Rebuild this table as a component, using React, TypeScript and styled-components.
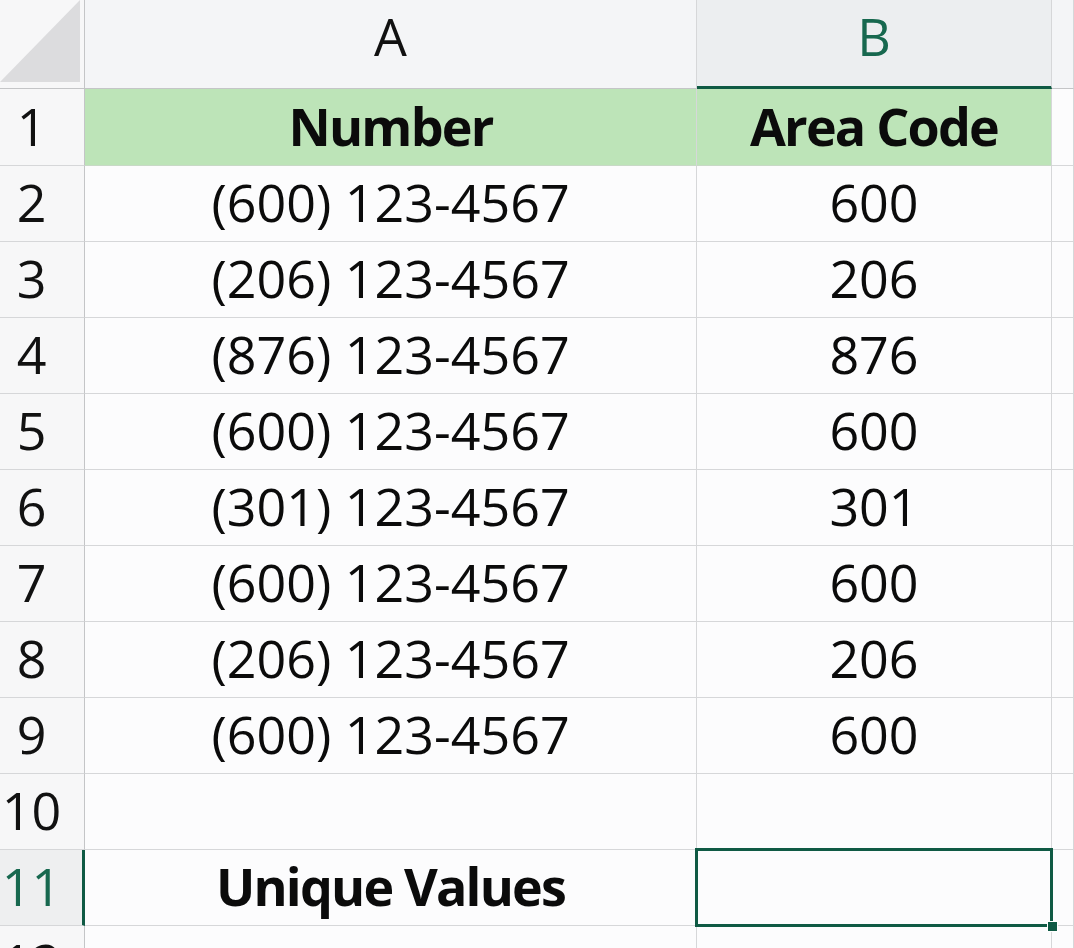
import React from "react";
import styled, { createGlobalStyle, css } from "styled-components";

const GREEN = "#0f5a44";
const GRID = "#d6d7d9";
const HEAD_LINE = "#c4c5c7";

const Global = createGlobalStyle`
  html, body { margin: 0; padding: 0; background: #fcfcfd; }
  body { font-family: "Open Sans", "Noto Sans", sans-serif; overflow: hidden; }
`;

const Sheet = styled.div`
  display: grid;
  grid-template-columns: 85px 612px 355px 1fr;
  grid-template-rows: 89px 77px repeat(11, 76px);
  width: 1074px;
  height: 948px;
  overflow: hidden;
  background: #fcfcfd;
  font-size: 52px;
  color: #0b0b0b;
`;

const Corner = styled.div`
  background: #f7f7f8;
  border-right: 1px solid ${HEAD_LINE};
  border-bottom: 1px solid ${HEAD_LINE};
  display: flex;
  align-items: flex-start;
  justify-content: flex-start;
`;

const ColHeader = styled.div<{ $selected?: boolean }>`
  display: flex;
  justify-content: center;
  align-items: flex-start;
  box-sizing: border-box;
  background: ${(p) => (p.$selected ? "#eceef0" : "#f4f5f7")};
  border-right: 1px solid ${GRID};
  border-bottom: 1px solid ${HEAD_LINE};
  color: ${(p) => (p.$selected ? "#17684f" : "#111")};
  ${(p) =>
    p.$selected &&
    css`
      border-bottom: 3px solid ${GREEN};
    `}
`;

const RowHeader = styled.div<{ $active?: boolean }>`
  display: flex;
  justify-content: center;
  align-items: center;
  padding-right: 21px;
  padding-bottom: 4px;
  box-sizing: border-box;
  background: ${(p) => (p.$active ? "#eeeff0" : "#f7f7f8")};
  border-right: 1px solid ${HEAD_LINE};
  border-bottom: 1px solid ${GRID};
  color: ${(p) => (p.$active ? "#17684f" : "#111")};
  ${(p) =>
    p.$active &&
    css`
      border-right: 3px solid ${GREEN};
      padding-right: 19px;
    `}
`;

const Cell = styled.div<{ $fill?: boolean; $bold?: boolean; $selected?: boolean }>`
  position: relative;
  display: flex;
  justify-content: center;
  align-items: center;
  padding-bottom: 4px;
  box-sizing: border-box;
  white-space: nowrap;
  background: ${(p) => (p.$fill ? "#bde4b8" : "#fcfcfd")};
  border-right: 1px solid ${GRID};
  border-bottom: 1px solid ${(p) => (p.$fill ? "#c8d9c6" : GRID)};
  font-weight: ${(p) => (p.$bold ? 700 : 400)};
  letter-spacing: ${(p) => (p.$bold ? "-1.8px" : "0")};
  ${(p) =>
    p.$selected &&
    css`
      z-index: 1;
      &::after {
        content: "";
        position: absolute;
        left: -2px;
        top: -2px;
        right: -2px;
        bottom: -2px;
        border: 3px solid ${GREEN};
        pointer-events: none;
      }
    `}
`;

const FillHandle = styled.span`
  position: absolute;
  right: -7px;
  bottom: -7px;
  width: 9px;
  height: 9px;
  background: ${GREEN};
  border: 1px solid #ffffff;
  z-index: 2;
`;

const CornerTriangle = () => (
  <svg width="80" height="82" viewBox="0 0 80 82">
    <polygon points="0,82 80,0 80,82" fill="#dcdcde" />
  </svg>
);

type Row = { a: string; b: string; header?: boolean; boldA?: boolean };

const rows: Row[] = [
  { a: "Number", b: "Area Code", header: true },
  { a: "(600) 123-4567", b: "600" },
  { a: "(206) 123-4567", b: "206" },
  { a: "(876) 123-4567", b: "876" },
  { a: "(600) 123-4567", b: "600" },
  { a: "(301) 123-4567", b: "301" },
  { a: "(600) 123-4567", b: "600" },
  { a: "(206) 123-4567", b: "206" },
  { a: "(600) 123-4567", b: "600" },
  { a: "", b: "" },
  { a: "Unique Values", b: "", boldA: true },
  { a: "", b: "" },
];

export default function App() {
  return (
    <>
      <Global />
      <Sheet>
        <Corner>
          <CornerTriangle />
        </Corner>
        <ColHeader>A</ColHeader>
        <ColHeader $selected>B</ColHeader>
        <ColHeader />
        {rows.map((r, i) => {
          const n = i + 1;
          const active = n === 11;
          return (
            <React.Fragment key={n}>
              <RowHeader $active={active}>{n}</RowHeader>
              <Cell $fill={r.header} $bold={r.header || r.boldA}>
                {r.a}
              </Cell>
              <Cell $fill={r.header} $bold={r.header} $selected={active}>
                {r.b}
                {active && <FillHandle />}
              </Cell>
              <Cell />
            </React.Fragment>
          );
        })}
      </Sheet>
    </>
  );
}
